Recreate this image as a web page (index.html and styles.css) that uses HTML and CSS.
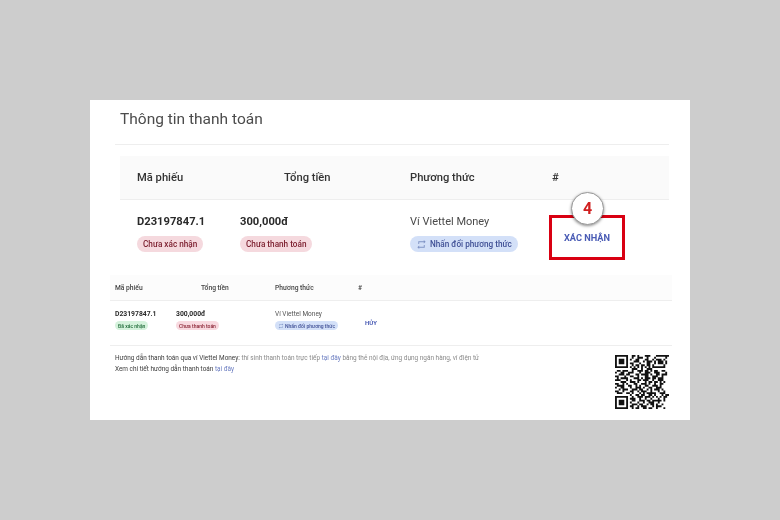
FILE: index.html
```html
<!DOCTYPE html>
<html lang="vi">
<head>
    <meta charset="UTF-8">
    <meta name="viewport" content="width=device-width, initial-scale=1.0">
    <title>Thông tin thanh toán</title>
    <link rel="stylesheet" href="styles.css">
</head>
<body>
    <div class="panel">
        <h2 class="title">Thông tin thanh toán</h2>

        <div class="big-table">
            <div class="big-row big-head">
                <div>Mã phiếu</div>
                <div class="head-total">Tổng tiền</div>
                <div>Phương thức</div>
                <div>#</div>
            </div>
            <div class="big-row big-body">
                <div>
                    <div class="code">D23197847.1</div>
                    <span class="tag tag-red">Chưa xác nhận</span>
                </div>
                <div>
                    <div class="code">300,000đ</div>
                    <span class="tag tag-red">Chưa thanh toán</span>
                </div>
                <div>
                    <div class="method">Ví Viettel Money</div>
                    <span class="tag tag-blue">
                        <svg class="swap" viewBox="0 0 24 24"><path d="M7 7h10v3l4-4-4-4v3H5v6h2zM17 17H7v-3l-4 4 4 4v-3h12v-6h-2z"/></svg>
                        Nhấn đổi phương thức
                    </span>
                </div>
                <div class="action-cell">
                    <a class="action" href="#">XÁC NHẬN</a>
                    <div class="mark"></div>
                    <div class="step">4</div>
                </div>
            </div>
        </div>

        <div class="small-table">
            <div class="small-row small-head">
                <div>Mã phiếu</div>
                <div class="small-total">Tổng tiền</div>
                <div>Phương thức</div>
                <div>#</div>
            </div>
            <div class="small-row small-body">
                <div>
                    <div class="small-code">D23197847.1</div>
                    <span class="mini mini-green">Đã xác nhận</span>
                </div>
                <div>
                    <div class="small-code">300,000đ</div>
                    <span class="mini mini-red">Chưa thanh toán</span>
                </div>
                <div>
                    <div class="small-method">Ví Viettel Money</div>
                    <span class="mini mini-blue">
                        <svg class="mini-swap" viewBox="0 0 24 24"><path d="M7 7h10v3l4-4-4-4v3H5v6h2zM17 17H7v-3l-4 4 4 4v-3h12v-6h-2z"/></svg>
                        Nhấn đổi phương thức
                    </span>
                </div>
                <div class="small-action"><a href="#">HỦY</a></div>
            </div>
        </div>

        <div class="guide">
            <div class="guide-text">
                <p>Hướng dẫn thanh toán qua ví Viettel Money: <span class="muted">thí sinh thanh toán trực tiếp</span> <a href="#">tại đây</a> <span class="muted">bằng thẻ nội địa, ứng dụng ngân hàng, ví điện tử</span></p>
                <p>Xem chi tiết hướng dẫn thanh toán <a href="#">tại đây</a></p>
            </div>
            <svg class="qr" viewBox="0 0 29 29">
                <path fill="none" stroke="#111" stroke-width="1" d="M0 .5h7m2 0h2m1 0h1m3 0h3m3 0h7M0 1.5h1m5 0h1m2 0h1m2 0h3m2 0h1m3 0h1m5 0h1M0 2.5h1m1 0h3m1 0h1m1 0h1m2 0h2m3 0h2m2 0h1m1 0h3m1 0h1M0 3.5h1m1 0h3m1 0h1m3 0h3m2 0h1m1 0h3m1 0h1m1 0h3m1 0h1M0 4.5h1m1 0h3m1 0h1m1 0h2m3 0h1m3 0h2m2 0h1m1 0h3m1 0h1M0 5.5h1m5 0h1m2 0h1m1 0h2m1 0h2m1 0h2m1 0h1m5 0h1M0 6.5h7m1 0h1m1 0h1m1 0h1m1 0h1m1 0h1m1 0h1m1 0h7M9 7.5h3m2 0h1m2 0h3M1 8.5h2m1 0h3m2 0h1m2 0h3m1 0h2m1 0h1m1 0h2m2 0h2M0 9.5h1m2 0h2m2 0h3m3 0h1m2 0h3m2 0h3m3 0h1M2 10.5h3m1 0h2m3 0h2m1 0h4m1 0h1m2 0h2m1 0h3M0 11.5h2m3 0h1m2 0h2m2 0h1m3 0h2m2 0h3m2 0h1M1 12.5h1m1 0h4m3 0h3m1 0h1m1 0h3m1 0h2m1 0h3M0 13.5h3m3 0h1m1 0h1m3 0h2m1 0h3m2 0h1m2 0h3M3 14.5h3m2 0h3m1 0h1m3 0h1m1 0h2m1 0h2m1 0h1m1 0h1M0 15.5h2m2 0h1m1 0h1m3 0h2m2 0h3m1 0h1m2 0h1m2 0h2M1 16.5h4m2 0h2m2 0h1m1 0h1m2 0h2m2 0h3m1 0h1M0 17.5h1m2 0h2m3 0h1m2 0h3m1 0h1m2 0h2m2 0h3M2 18.5h1m1 0h3m2 0h3m1 0h2m2 0h1m1 0h1m1 0h3m1 0h1M0 19.5h2m2 0h1m3 0h2m2 0h1m1 0h3m2 0h1m3 0h1m2 0h1M1 20.5h3m2 0h2m1 0h1m3 0h1m1 0h1m1 0h5m2 0h3M8 21.5h1m2 0h2m1 0h2m2 0h2m1 0h1m3 0h1m1 0h2M0 22.5h7m2 0h1m2 0h3m1 0h3m1 0h1m1 0h1m1 0h1m1 0h2M0 23.5h1m5 0h1m1 0h3m2 0h1m2 0h1m2 0h1m3 0h1m2 0h1M0 24.5h1m1 0h3m1 0h1m2 0h2m2 0h3m1 0h2m1 0h5m1 0h1M0 25.5h1m1 0h3m1 0h1m1 0h1m3 0h1m2 0h1m2 0h3m2 0h1M0 26.5h1m1 0h3m1 0h1m2 0h3m1 0h2m2 0h1m1 0h2m1 0h1m2 0h1M0 27.5h1m5 0h1m1 0h2m2 0h1m1 0h3m3 0h1m1 0h3M0 28.5h7m2 0h1m1 0h2m2 0h2m1 0h2m2 0h1m3 0h1"/>
            </svg>
        </div>
    </div>
</body>
</html>
```

FILE: styles.css
```css
* {
    box-sizing: border-box;
}
body {
    margin: 0;
    height: 520px;
    overflow: hidden;
    background-color: #cdcdcd;
    font-family: Roboto, sans-serif;
    padding: 100px 90px;
}
a {
    text-decoration: none;
}
.panel {
    background: #ffffff;
    width: 600px;
    height: 320px;
    padding: 0 21px 0 20px;
    filter: blur(0.3px);
}
.title {
    margin: 0 0 0 10px;
    padding-top: 9px;
    height: 44px;
    font-size: 15.5px;
    line-height: 20px;
    font-weight: 400;
    color: #4c4c4c;
}
.big-table {
    margin-left: 5px;
    border-top: 1px solid #eeeeee;
    padding: 11px 0 0 5px;
}
.big-row {
    display: grid;
    grid-template-columns: 103px 170px 142px 1fr;
    padding-left: 17px;
}
.big-head {
    height: 44px;
    align-items: center;
    background: #fafafa;
    border-bottom: 1px solid #eeeeee;
    font-size: 11.2px;
    font-weight: 500;
    color: #333333;
}
.head-total {
    padding-left: 44px;
}
.big-body {
    height: 75px;
    padding-top: 14px;
}
.code {
    font-size: 11.2px;
    line-height: 16px;
    font-weight: 700;
    color: #2a2a2a;
}
.method {
    font-size: 11px;
    line-height: 16px;
    color: #4a4a4a;
}
.tag {
    display: flex;
    width: fit-content;
    align-items: center;
    gap: 3px;
    height: 16px;
    margin-top: 6px;
    padding: 0 6px;
    border-radius: 8px;
    font-size: 8.2px;
    font-weight: 500;
    white-space: nowrap;
}
.tag-red {
    background: #f5d9de;
    color: #7d2030;
}
.tag-blue {
    background: #d3e0f8;
    color: #3f4f95;
}
.swap {
    width: 11px;
    height: 11px;
    fill: #7f93c4;
}
.action-cell {
    position: relative;
    padding-top: 12px;
    padding-left: 12px;
}
.action {
    font-size: 9.2px;
    font-weight: 700;
    color: #4a5cb5;
}
.mark {
    position: absolute;
    left: -3px;
    top: 1px;
    width: 76px;
    height: 45px;
    border: 3.5px solid #d90012;
}
.step {
    position: absolute;
    left: 19px;
    top: -22px;
    width: 33px;
    height: 33px;
    border-radius: 50%;
    background: #ffffff;
    border: 1px solid #999999;
    box-shadow: 0 1px 3px rgba(0, 0, 0, 0.45);
    color: #d02020;
    font-size: 16px;
    font-weight: 700;
    line-height: 31px;
    text-align: center;
}
.small-table {
    margin-right: -3px;
    filter: blur(0.3px);
}
.small-row {
    display: grid;
    grid-template-columns: 61px 99px 83px 1fr;
    padding-left: 5px;
}
.small-head {
    height: 26px;
    align-items: center;
    background: #fcfcfc;
    border-bottom: 1px solid #eeeeee;
    font-size: 6.7px;
    font-weight: 500;
    color: #444444;
}
.small-total {
    padding-left: 25px;
}
.small-body {
    height: 45px;
    padding-top: 9px;
    border-bottom: 1px solid #eeeeee;
}
.small-code {
    font-size: 6.8px;
    line-height: 9px;
    font-weight: 700;
    color: #2a2a2a;
}
.small-method {
    font-size: 6.5px;
    line-height: 9px;
    color: #555555;
}
.mini {
    display: flex;
    width: fit-content;
    align-items: center;
    gap: 1px;
    height: 9px;
    margin-top: 2px;
    padding: 0 3px;
    border-radius: 5px;
    font-size: 5px;
    font-weight: 500;
    white-space: nowrap;
}
.mini-green {
    background: #d5f2dc;
    color: #1f6b38;
}
.mini-red {
    background: #f8d9df;
    color: #8a2233;
}
.mini-blue {
    background: #d3e0f8;
    color: #3f4f95;
}
.mini-swap {
    width: 6px;
    height: 6px;
    fill: #7f93c4;
}
.small-action {
    padding: 9px 0 0 7px;
    font-size: 6px;
    font-weight: 700;
}
.small-action a {
    color: #4a5cb5;
}
.guide {
    display: flex;
    justify-content: space-between;
    padding: 7px 1px 0 5px;
}
.guide-text p {
    margin: 0;
    font-size: 6.45px;
    line-height: 11px;
    color: #3c3c3c;
}
.guide-text a {
    color: #6a7cc0;
}
.muted {
    color: #8a8a8a;
}
.qr {
    width: 54px;
    height: 54px;
    margin: 2px -1px 0 0;
}
```
